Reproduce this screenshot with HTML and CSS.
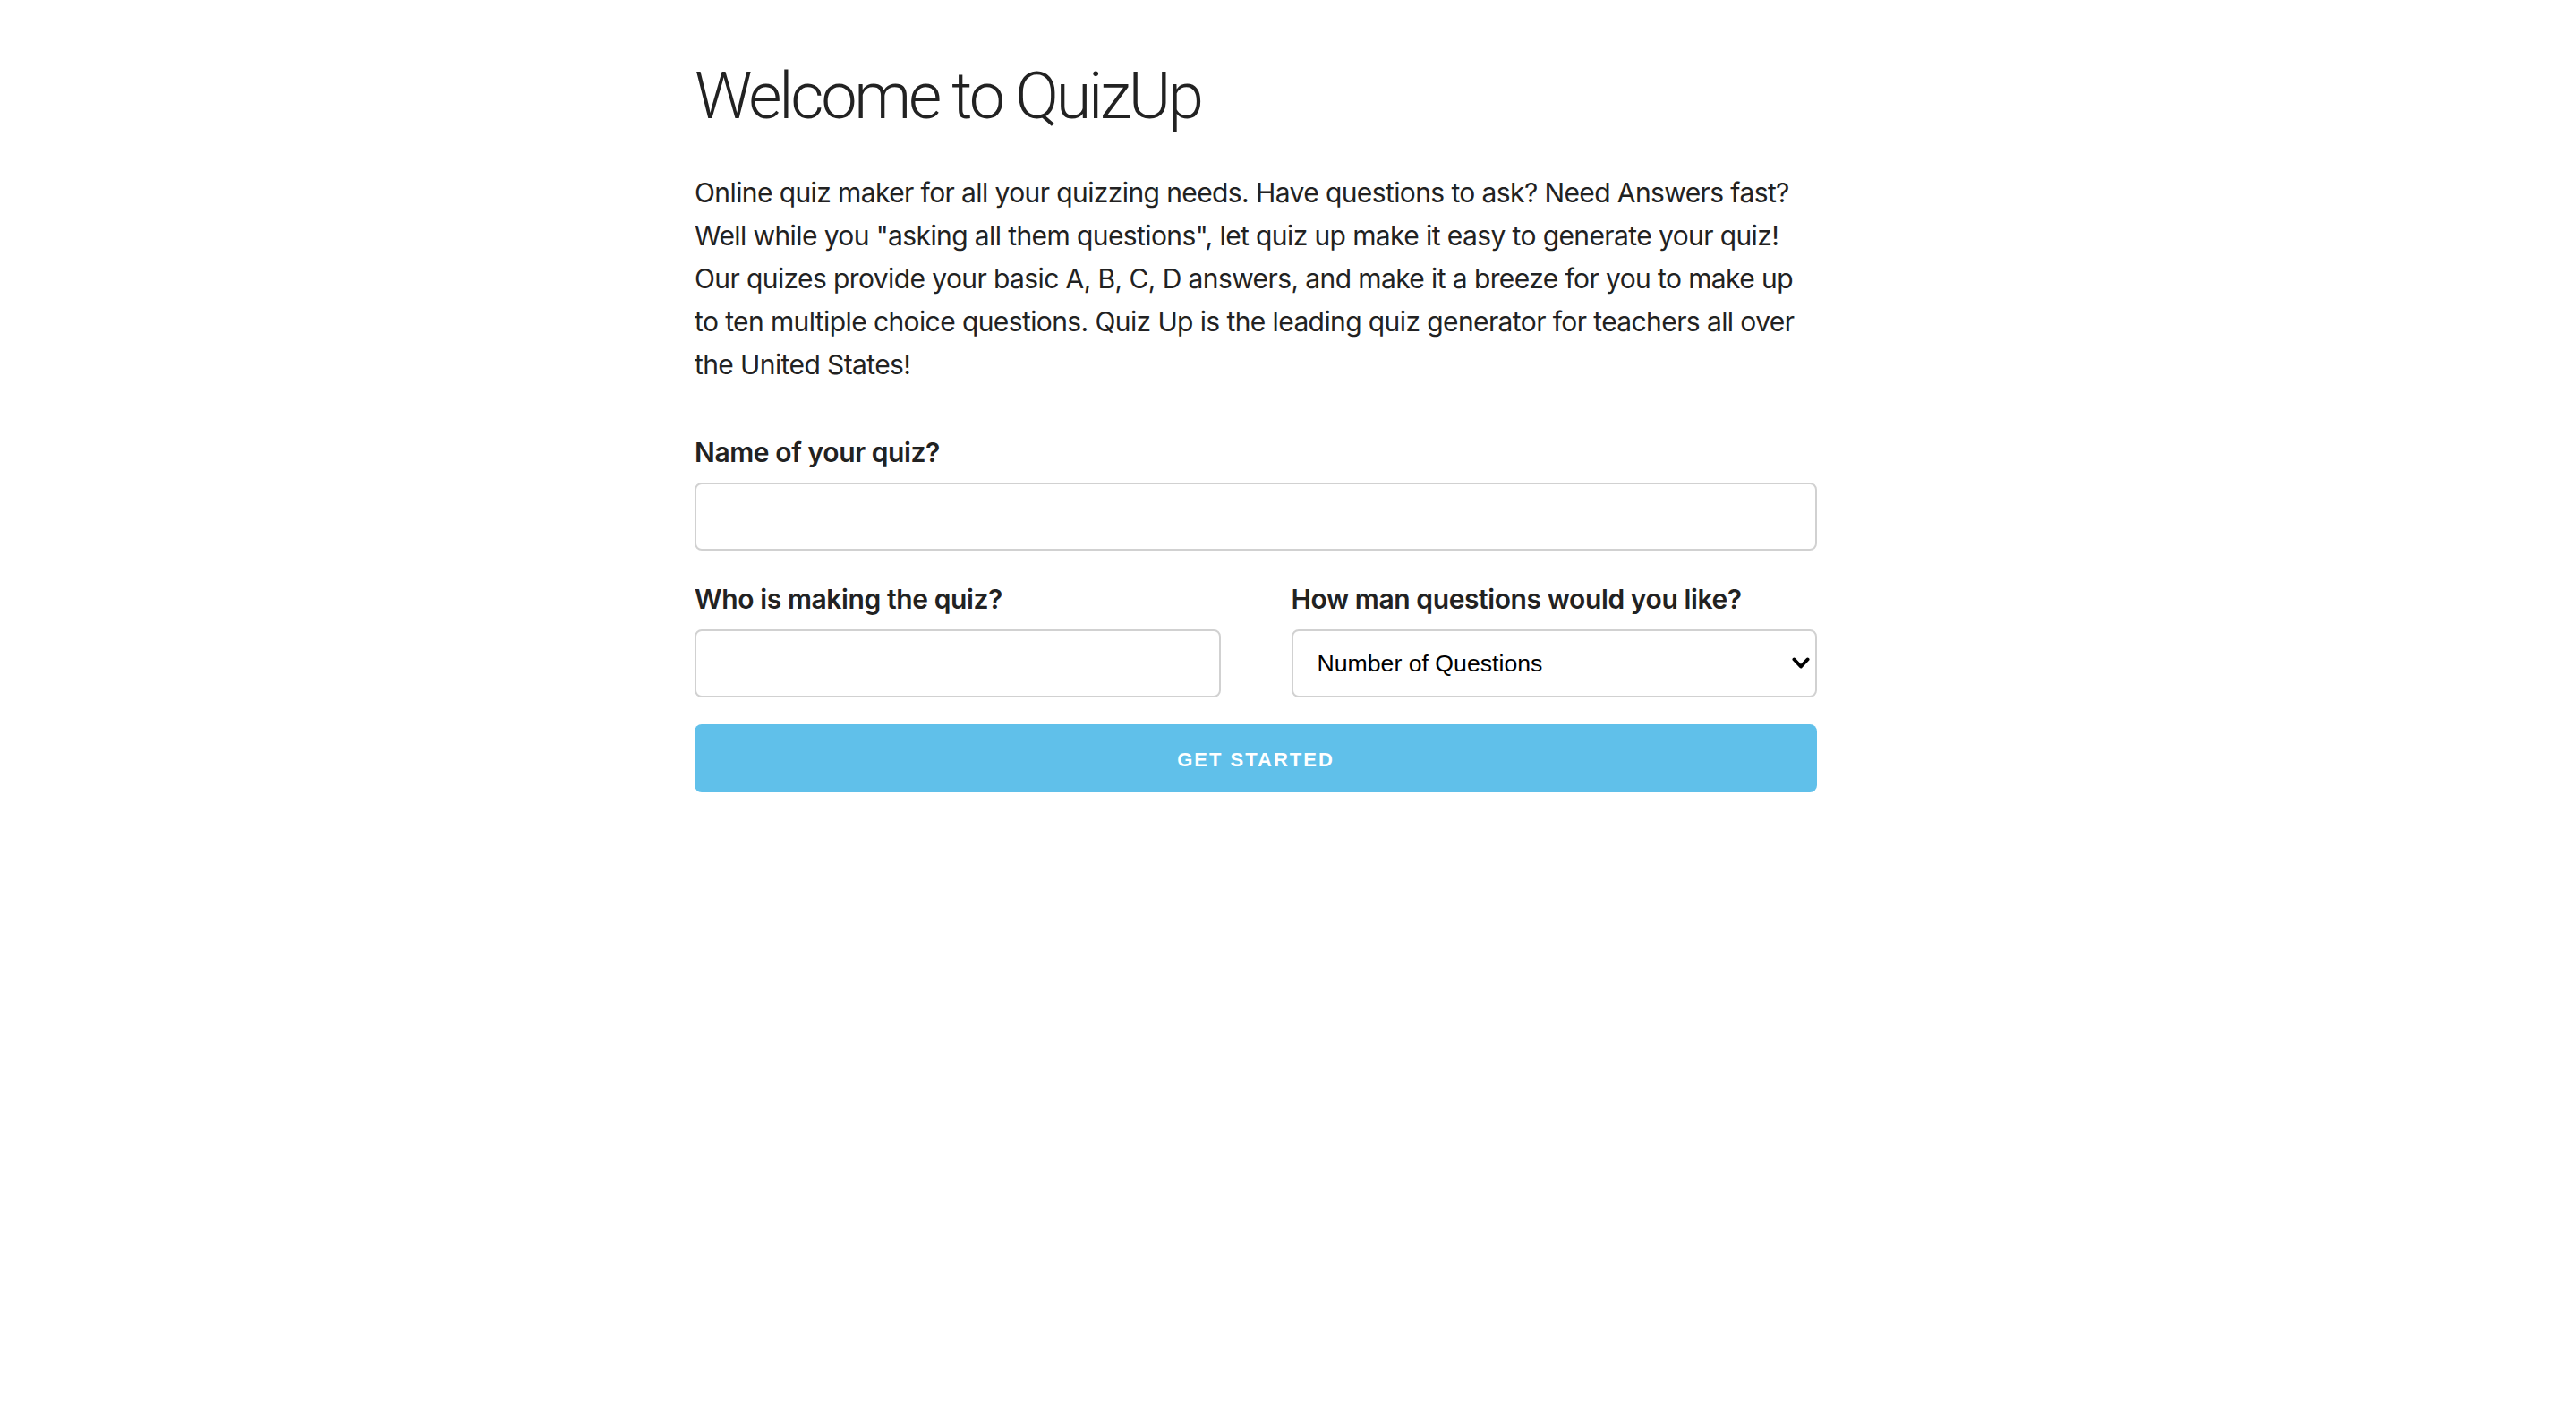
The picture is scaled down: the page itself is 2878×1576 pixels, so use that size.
FILE: index.html
```html
<!DOCTYPE html>
<html lang="en">
<head>
<meta charset="utf-8">
<title>QuizUp</title>
<link rel="stylesheet" href="styles.css">
</head>
<body>
<main class="container">
  <h3 class="title">Welcome to QuizUp</h3>
  <p class="intro">Online quiz maker for all your quizzing needs. Have questions to ask? Need Answers fast? Well while you "asking all them questions", let quiz up make it easy to generate your quiz! Our quizes provide your basic A, B, C, D answers, and make it a breeze for you to make up to ten multiple choice questions. Quiz Up is the leading quiz generator for teachers all over the United States!</p>
  <form class="quiz-form">
    <div class="field">
      <label for="quizName">Name of your quiz?</label>
      <input id="quizName" class="input" type="text">
    </div>
    <div class="row">
      <div class="field">
        <label for="author">Who is making the quiz?</label>
        <input id="author" class="input" type="text">
      </div>
      <div class="field">
        <label for="count">How man questions would you like?</label>
        <div class="select-wrap">
          <select id="count" class="select">
            <option>Number of Questions</option>
            <option>1</option>
            <option>2</option>
            <option>3</option>
            <option>4</option>
            <option>5</option>
            <option>6</option>
            <option>7</option>
            <option>8</option>
            <option>9</option>
            <option>10</option>
          </select>
          <svg class="chevron" width="20" height="14" viewBox="0 0 20 14" aria-hidden="true">
            <path d="M2.5 2.5 L10 10.5 L17.5 2.5" fill="none" stroke="#000" stroke-width="4" stroke-linecap="round" stroke-linejoin="round"/>
          </svg>
        </div>
      </div>
    </div>
    <button type="button" class="btn-primary">Get Started</button>
  </form>
</main>
</body>
</html>
```

FILE: styles.css
```css
html, body {
  margin: 0;
  padding: 0;
  background: #ffffff;
}

body {
  font-family: Inter, "Noto Sans", sans-serif;
  font-size: 30px;
  line-height: 48px;
  color: #222222;
}

.container {
  width: 1254px;
  margin-left: 776px;
  padding-top: 61px;
}

.title {
  margin: 0 0 36px 0;
  font-family: Roboto, "Liberation Sans", sans-serif;
  font-weight: 300;
  font-size: 72px;
  line-height: 94px;
  letter-spacing: -3.2px;
}

.intro {
  margin: 0 0 50px 0;
  letter-spacing: -0.6px;
}

.quiz-form {
  display: flex;
  flex-direction: column;
}

.field {
  display: flex;
  flex-direction: column;
}

.field label {
  font-weight: 600;
  margin-bottom: 10px;
  letter-spacing: -0.4px;
}

.row {
  display: grid;
  grid-template-columns: 1fr 1fr;
  column-gap: 79px;
}

.input,
.select {
  box-sizing: border-box;
  width: 100%;
  height: 76px;
  border: 2px solid #d1d1d1;
  border-radius: 8px;
  background: #ffffff;
  margin: 0 0 30px 0;
  padding: 12px 20px;
  font-family: "Liberation Sans", Arial, sans-serif;
  font-size: 26.67px;
  color: #000000;
}

.select-wrap {
  position: relative;
}

.select {
  appearance: none;
  -webkit-appearance: none;
  padding: 12px 60px 12px 27px;
}

.chevron {
  position: absolute;
  right: 8px;
  top: 31px;
  pointer-events: none;
}

.btn-primary {
  box-sizing: border-box;
  height: 76px;
  border: none;
  border-radius: 8px;
  background: #60c0ea;
  color: #ffffff;
  font-family: "Liberation Sans", Arial, sans-serif;
  font-size: 22px;
  font-weight: 700;
  letter-spacing: 2px;
  text-transform: uppercase;
  padding: 4px 60px 0 60px;
  cursor: pointer;
}
```
